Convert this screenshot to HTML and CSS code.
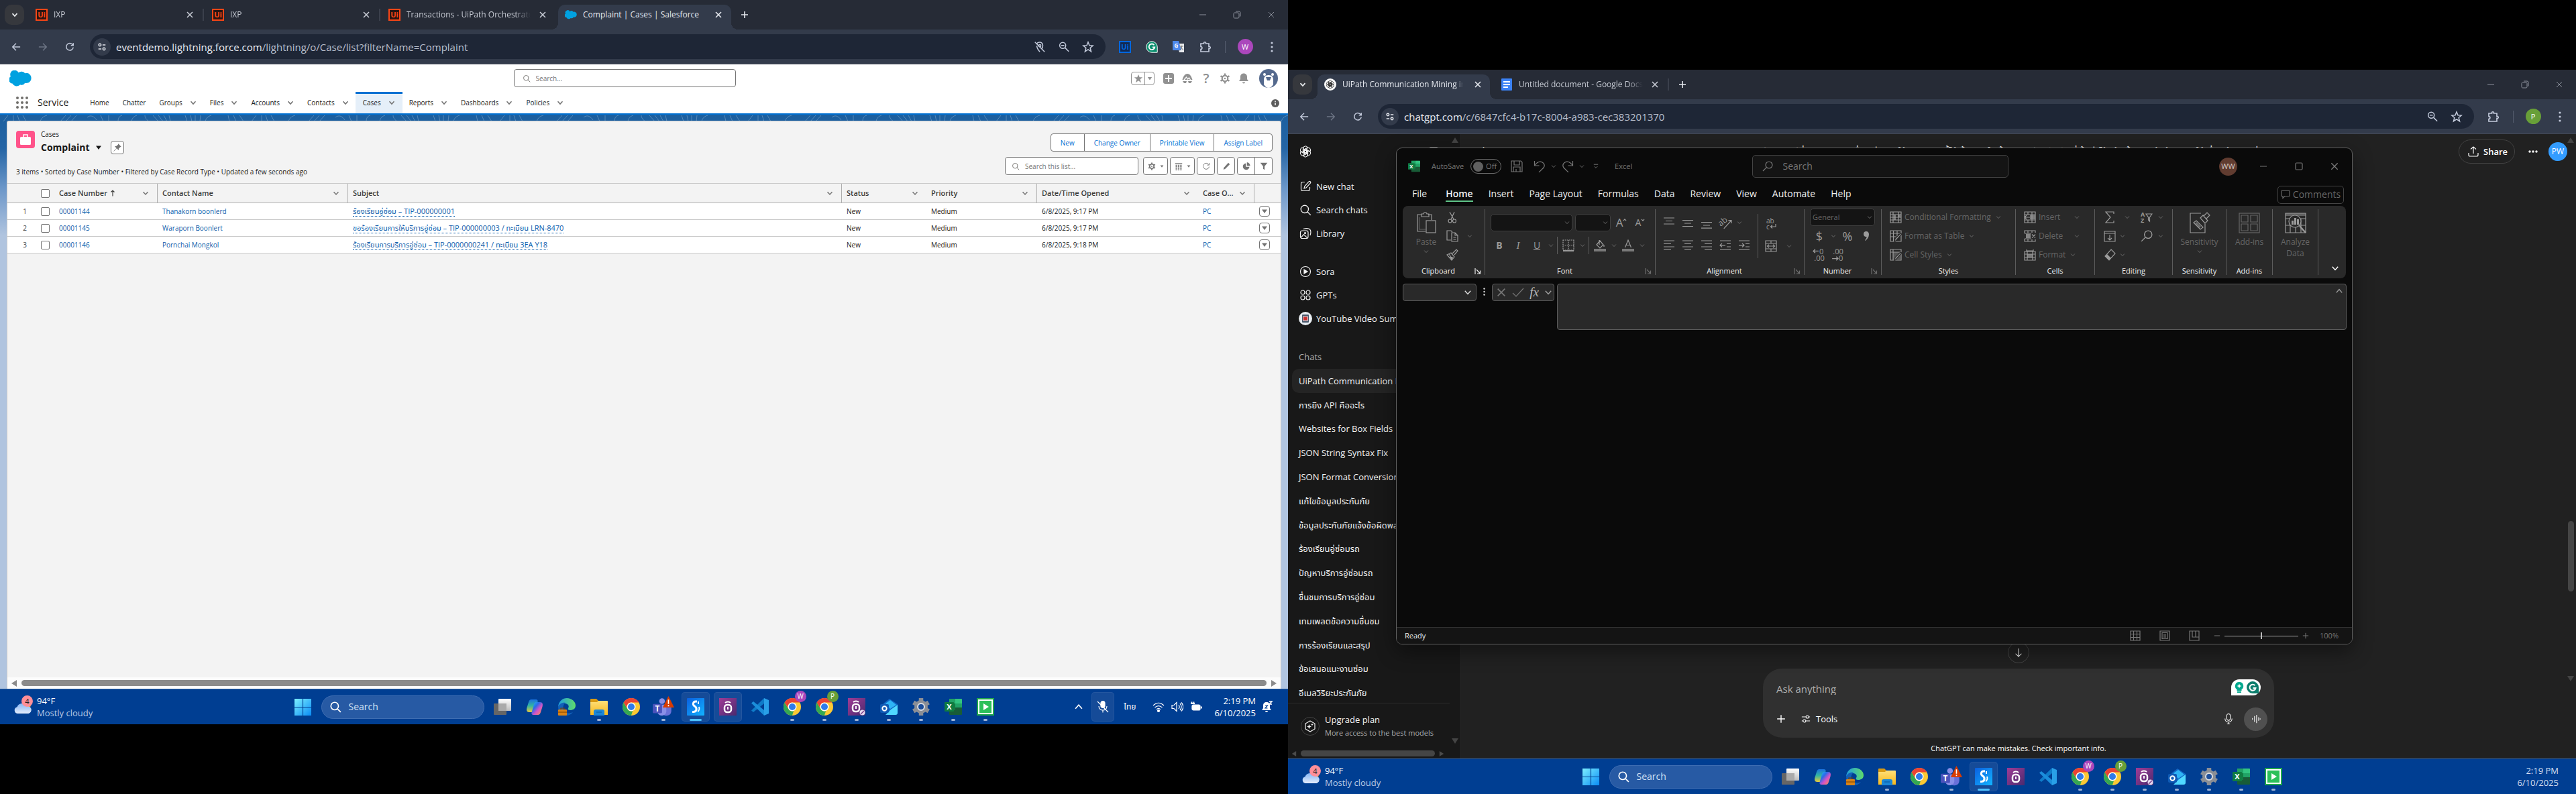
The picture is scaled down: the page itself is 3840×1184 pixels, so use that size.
FILE: index.html
```html
<!DOCTYPE html>
<html lang="en">
<head>
<meta charset="utf-8">
<title>Desktop</title>
<link rel="stylesheet" href="styles.css">
</head>
<body>
<svg class="defs" aria-hidden="true">
  <defs>
    <linearGradient id="g-win" x1="0" y1="0" x2="1" y2="1"><stop offset="0" stop-color="#7df0ff"/><stop offset="1" stop-color="#0a8cf5"/></linearGradient>
    <linearGradient id="g-cop" x1="0" y1="0" x2="1" y2="1"><stop offset="0" stop-color="#1fc8f0"/><stop offset=".35" stop-color="#2a6be8"/><stop offset=".6" stop-color="#d553c8"/><stop offset="1" stop-color="#ff9a3c"/></linearGradient>
    <linearGradient id="g-cop2" x1="0" y1="0" x2="0" y2="1"><stop offset="0" stop-color="#1a6fe0"/><stop offset=".5" stop-color="#33b5a0"/><stop offset="1" stop-color="#e8c93c"/></linearGradient>
    <linearGradient id="g-edge" x1="0" y1="0" x2="1" y2="0"><stop offset="0" stop-color="#1f9de0"/><stop offset="1" stop-color="#5fdc6a"/></linearGradient>
    <linearGradient id="g-fold" x1="0" y1="0" x2="0" y2="1"><stop offset="0" stop-color="#ffe07a"/><stop offset="1" stop-color="#f7b81c"/></linearGradient>
    <linearGradient id="g-s" x1="0" y1="0" x2="1" y2="1"><stop offset="0" stop-color="#0a5fe0"/><stop offset="1" stop-color="#12b4ff"/></linearGradient>
    <linearGradient id="g-p" x1="0" y1="0" x2="1" y2="1"><stop offset="0" stop-color="#a03c96"/><stop offset="1" stop-color="#4a2a6e"/></linearGradient>
    <linearGradient id="g-cloud" x1="0" y1="0" x2="0" y2="1"><stop offset="0" stop-color="#86b6f5"/><stop offset="1" stop-color="#e4ecfb"/></linearGradient>
    <linearGradient id="g-tv" x1="0" y1="0" x2="0" y2="1"><stop offset="0" stop-color="#fff"/><stop offset="1" stop-color="#bdbdbd"/></linearGradient>
  </defs>
  <symbol id="chev" viewBox="0 0 10 10"><path d="M1.5 3.2 5 7l3.5-3.8"/></symbol>
  <symbol id="chev-up" viewBox="0 0 10 10"><path d="M1.5 7 5 3l3.5 4"/></symbol>
  <symbol id="x" viewBox="0 0 12 12"><path d="m2 2 8 8M10 2l-8 8"/></symbol>
  <symbol id="plus" viewBox="0 0 12 12"><path d="M6 1v10M1 6h10"/></symbol>
  <symbol id="minus" viewBox="0 0 12 12"><path d="M1 6h10"/></symbol>
  <symbol id="restore" viewBox="0 0 12 12"><rect x="1" y="3" width="8" height="8" rx="1.5"/><path d="M4 1h5a2 2 0 0 1 2 2v5.5"/></symbol>
  <symbol id="max" viewBox="0 0 12 12"><rect x="1" y="1" width="10" height="10" rx="1.5"/></symbol>
  <symbol id="back" viewBox="0 0 16 16"><path d="M15 8H2M8 2 2 8l6 6"/></symbol>
  <symbol id="fwd" viewBox="0 0 16 16"><path d="M1 8h13M8 2l6 6-6 6"/></symbol>
  <symbol id="reload" viewBox="0 0 16 16"><path d="M13.5 5.2A6 6 0 1 0 14 8.8M14 1.5v4h-4"/></symbol>
  <symbol id="tune" viewBox="0 0 16 16"><circle cx="4.5" cy="4.5" r="2"/><path d="M9 4.500h5M2 11.500h5"/><circle cx="11.5" cy="11.5" r="2"/></symbol>
  <symbol id="locoff" viewBox="0 0 20 20"><path d="M5 4.500C7 1 15 1 15 8c0 2-.8 3.800-2 5.500M10 18c-3-3.500-5-7-5-10M2 2l16 16"/><circle cx="10" cy="8" r="1.8"/></symbol>
  <symbol id="zoomout" viewBox="0 0 20 20"><circle cx="8" cy="7.5" r="5"/><path d="m12 11.500 6 6M5.500 7.500h5"/></symbol>
  <symbol id="star" viewBox="0 0 20 20"><path d="m10 2 2.200 5.500 5.800.4-4.500 3.800 1.500 5.800-5-3.200-5 3.200 1.500-5.800L2 7.900l5.800-.4z"/></symbol>
  <symbol id="puzzle" viewBox="0 0 20 20"><path d="M3 5h4.500c-.6-3 3.600-3 3 0H15v4.500c3-.6 3 3.600 0 3V17H3v-3.500c2.500 0 2.500-4 0-4z"/></symbol>
  <symbol id="kebab" viewBox="0 0 4 18"><g fill="currentColor" stroke="none"><circle cx="2" cy="3" r="1.6"/><circle cx="2" cy="9" r="1.6"/><circle cx="2" cy="15" r="1.6"/></g></symbol>
  <symbol id="ui" viewBox="0 0 18 18"><rect x="1" y="1" width="16" height="16" fill="#2b1512" stroke="#fa4616" stroke-width="2"/><text x="9" y="13" font-size="11" font-weight="700" text-anchor="middle" fill="#fa4616" stroke="none">Ui</text></symbol>
  <symbol id="ui-b" viewBox="0 0 18 18"><rect x="1" y="1" width="16" height="16" fill="#122a52" stroke="#0067df" stroke-width="2"/><text x="9" y="13" font-size="11" font-weight="700" text-anchor="middle" fill="#0067df" stroke="none">Ui</text></symbol>
  <symbol id="cloud" viewBox="0 0 34 24"><path fill="#00a1e0" stroke="none" d="M14 3a7 7 0 0 1 10 1 7.500 7.500 0 0 1 9.500 8c0 5-5 8-9.500 7a6 6 0 0 1-7.500 2.500A7 7 0 0 1 5 20 6 6 0 0 1 2 9a6.500 6.500 0 0 1 12-6z"/></symbol>
  <symbol id="gram" viewBox="0 0 18 18"><path fill="#0b8f6f" stroke="#fff" stroke-width="1" d="M9 .8a8.200 8.200 0 0 1 8.200 8.200v8.200H9A8.200 8.200 0 0 1 9 .8z"/><path d="M12.500 6.200A4.300 4.300 0 1 0 13.300 9.500H10" fill="none" stroke="#fff" stroke-width="1.8"/></symbol>
  <symbol id="trans" viewBox="0 0 18 18"><path fill="#e8eaed" stroke="none" d="M7 4h10v13H10z"/><path fill="#4d88ec" stroke="none" d="M0 0h9l4 14H1a1 1 0 0 1-1-1z"/><text x="5.5" y="10" font-size="8" font-weight="700" text-anchor="middle" fill="#fff" stroke="none">G</text><path d="M11 8h5M13.500 7c0 4-1 6-3 7M12 9l4 5" stroke="#777" stroke-width="1"/></symbol>
  <symbol id="mag" viewBox="0 0 16 16"><circle cx="7" cy="7" r="5"/><path d="m10.500 10.500 4.500 4.500"/></symbol>
  <symbol id="mag-l" viewBox="0 0 16 16"><circle cx="10" cy="6" r="5"/><path d="M6.300 9.700 1 15"/></symbol>
  <symbol id="caret" viewBox="0 0 10 10"><path fill="currentColor" stroke="none" d="M1 2.500h8L5 8z"/></symbol>
  <symbol id="starf" viewBox="0 0 16 16"><path fill="currentColor" stroke="none" d="m8 1 2 5h5l-4 3.500L12.500 15 8 11.800 3.500 15 5 9.500 1 6h5z"/></symbol>
  <symbol id="plusbox" viewBox="0 0 16 16"><rect width="16" height="16" rx="3" fill="currentColor" stroke="none"/><path d="M8 3v10M3 8h10" stroke="#fff" stroke-width="2"/></symbol>
  <symbol id="trail" viewBox="0 0 16 16"><path fill="currentColor" stroke="none" d="M8 1c4 0 6 4 7.500 9H.5C2 5 4 1 8 1zM1 12h6l-1 3H3zM9 12h6l-2 3h-3z"/><path d="m3 10 3.500-4 2 3 2-2 2 3" stroke="#fff" stroke-width="1.2"/></symbol>
  <symbol id="gear" viewBox="0 0 16 16"><circle cx="8" cy="8" r="4.3" stroke-width="2.2"/><path d="M8 .5v2.500M8 13v2.500M1.500 4.200l2.200 1.300M12.300 10.500l2.200 1.300M1.500 11.800l2.200-1.300M12.300 5.500l2.200-1.300" stroke-width="2.4"/><circle cx="8" cy="8" r="1.2" fill="currentColor" stroke="none"/></symbol>
  <symbol id="bell" viewBox="0 0 16 16"><path fill="currentColor" stroke="none" d="M8 .5c3.200 0 5 2.300 5 5V9l2 3H1l2-3V5.500c0-2.700 1.800-5 5-5zM6 13.500h4a2 2 0 0 1-4 0z"/></symbol>
  <symbol id="bear" viewBox="0 0 28 28"><circle cx="14" cy="14" r="14" fill="#54698d" stroke="none"/><path fill="#fff" stroke="none" d="M14 9c5 0 7 3 7 7v7c-2 3-4 5-7 5s-5-2-7-5v-7c0-4 2-7 7-7z"/><circle cx="8" cy="8" r="2" fill="#fff" stroke="none"/><circle cx="20" cy="8" r="2" fill="#fff" stroke="none"/><path fill="#54698d" stroke="none" d="M10 12h8l-2 5h-4z"/></symbol>
  <symbol id="info" viewBox="0 0 12 12"><circle cx="6" cy="6" r="6" fill="currentColor" stroke="none"/><path d="M6 5v4M6 2.500v1.500" stroke="#fff" stroke-width="1.5"/></symbol>
  <symbol id="waffle" viewBox="0 0 18 18"><g fill="#706e6b" stroke="none"><circle cx="2" cy="2" r="2"/><circle cx="9" cy="2" r="2"/><circle cx="16" cy="2" r="2"/><circle cx="2" cy="9" r="2"/><circle cx="9" cy="9" r="2"/><circle cx="16" cy="9" r="2"/><circle cx="2" cy="16" r="2"/><circle cx="9" cy="16" r="2"/><circle cx="16" cy="16" r="2"/></g></symbol>
  <symbol id="case" viewBox="0 0 28 26"><rect width="28" height="26" rx="4" fill="#ff538a"/><rect x="6" y="9" width="16" height="12" rx="1.5" fill="#fff"/><path d="M11 9V6h6v3" fill="none" stroke="#fff" stroke-width="1.5"/></symbol>
  <symbol id="pin" viewBox="0 0 16 16"><path fill="currentColor" stroke="none" d="m9.500 1.500 5 5-1.500.5-2.500 2.500-.5 3-3-3L2 14.500 1.500 14l5-5-3-3 3-.5L9 3z"/></symbol>
  <symbol id="cols" viewBox="0 0 16 16"><path d="M1 2.500h14M2 6h3M6.500 6h3M11 6h3M2 9h3M6.500 9h3M11 9h3M2 12h3M6.500 12h3M11 12h3M2 15h3M6.500 15h3M11 15h3" stroke-width="1.8"/></symbol>
  <symbol id="pencil" viewBox="0 0 16 16"><path fill="currentColor" stroke="none" d="m12 1 3 3-9 9-3.500 1.500L3 11z"/></symbol>
  <symbol id="pie" viewBox="0 0 16 16"><path fill="currentColor" stroke="none" d="M7 2v7h7a6.500 6.500 0 1 1-7-7zM9 0a7 7 0 0 1 6.500 7H9z"/></symbol>
  <symbol id="funnel" viewBox="0 0 16 16"><path fill="currentColor" stroke="none" d="M1 1h14l-5.500 7v7l-3-2V8z"/></symbol>
  <symbol id="sort" viewBox="0 0 8 10"><path d="M4 9.500V1M1.500 3.500 4 1l2.500 2.500"/></symbol>
  <symbol id="weather" viewBox="0 0 28 28"><circle cx="19" cy="14" r="6" fill="#f59a23"/><path fill="url(#g-cloud)" d="M5 27a5 5 0 0 1-.5-9.800 8 8 0 0 1 14.500-1A5.500 5.500 0 1 1 21.500 27z"/><circle cx="19.5" cy="8.500" r="8.500" fill="#ff8f99"/><text x="19.5" y="12.500" font-size="11" text-anchor="middle" fill="#222">4</text></symbol>
  <symbol id="win" viewBox="0 0 26 26"><path fill="url(#g-win)" d="M0 0h12.400v12.400H0zM13.600 0H26v12.400H13.600zM0 13.600h12.400V26H0zM13.600 13.600H26V26H13.600z"/></symbol>
  <symbol id="tview" viewBox="0 0 26 26"><rect x="7" y="1" width="19" height="18" rx="1" fill="url(#g-tv)"/><rect x="0" y="8" width="19" height="17" rx="1" fill="#666"/><path d="M7 8h12v11H7z" fill="#aaa"/></symbol>
  <symbol id="copilot" viewBox="0 0 26 26"><path fill="url(#g-cop2)" d="M8 2h7c2 0 3 1.500 2.500 3.500L14 18c-.8 2.500-2 3-4 3H5c-4 0-4.500-3-3.500-7L4 6c.8-2.800 2-4 4-4z"/><path fill="url(#g-cop)" d="M18 25h-7c-2 0-3-1.500-2.500-3.500L12 9c.8-2.500 2-3 4-3h5c4 0 4.500 3 3.500 7L22 21c-.8 2.800-2 4-4 4z"/></symbol>
  <symbol id="edge" viewBox="0 0 26 26"><path fill="url(#g-edge)" d="M0 13C1 4 7 0 13 0c7 0 13 5 13 11 0 5-4 7-8 7-3 0-4-1-3-3 2-3 0-7-5-7-5 0-8 3-10 5z"/><path fill="#1360b8" d="M0 13c2-5 7-7 11-6-4 3-5 9-1 13 3 3 8 3 12 1-3 4-7 5-10 5C5 26 0 20 0 13z"/><rect x="0" y="17" width="13" height="9" rx="1" fill="#d98316"/><path d="M4 17v-2h5v2M0 21h13" fill="none" stroke="#7a4300"/></symbol>
  <symbol id="folder" viewBox="0 0 26 26"><path fill="#d99a12" d="M0 2a1 1 0 0 1 1-1h8l3 3v4H0z"/><path fill="url(#g-fold)" d="M0 6h10l2-2h13a1 1 0 0 1 1 1v20H0z"/><path fill="#1a86d8" d="M5 26v-6a3 3 0 0 1 3-3h10a3 3 0 0 1 3 3v6z"/><path d="M9 21h8" stroke="#0b5ba6"/></symbol>
  <symbol id="chrome" viewBox="0 0 24 24"><circle cx="12" cy="12" r="12" fill="#fcc934"/><path fill="#34a853" d="M1.600 6 6.800 15A6 6 0 0 0 14 17.600L11.900 24A12 12 0 0 1 1.600 6z"/><path fill="#ea4335" d="M1.600 6A12 12 0 0 1 22.400 6H12a6 6 0 0 0-5.200 9z"/><circle cx="12" cy="12" r="6" fill="#fff"/><circle cx="12" cy="12" r="4.6" fill="#2f7bea"/></symbol>
  <symbol id="teams" viewBox="0 0 30 30"><circle cx="13" cy="7" r="4" fill="#8a8fe8"/><path fill="#6a70d8" d="M13 12h13v9a7 7 0 0 1-13 3z"/><path fill="#8a8fe8" d="M7 12h12v10a6.500 6.500 0 0 1-12 2z"/><rect x="0" y="11" width="13" height="13" rx="1.5" fill="#4b53bc"/><text x="6.5" y="21.5" font-size="11" font-weight="700" text-anchor="middle" fill="#fff">T</text><path fill="#d83b01" d="M22 0 30 16H14z"/><path d="M22 5v6M22 12.500v1.800" stroke="#fff" stroke-width="1.6"/></symbol>
  <symbol id="s-app" viewBox="0 0 26 26"><rect width="26" height="26" rx="1" fill="url(#g-s)"/><path d="M15 5h-2c-4 0-5 5-1.500 7s4 8-1.500 8.500H8" fill="none" stroke="#fff" stroke-width="3"/><path d="M17 5v4M18 13c1 3 0 6-2 7" fill="none" stroke="#fff" stroke-width="2"/></symbol>
  <symbol id="p-app" viewBox="0 0 26 26"><rect width="26" height="26" fill="url(#g-p)"/><rect x="8" y="10" width="10" height="11" rx="4" fill="none" stroke="#fff" stroke-width="2.5"/><path d="M9 7c2-2 6-2 8 0M13 13v4" fill="none" stroke="#fff" stroke-width="2"/></symbol>
  <symbol id="p-app2" viewBox="0 0 26 26"><rect width="26" height="26" fill="url(#g-p)"/><rect x="7" y="9" width="10" height="11" rx="4" fill="none" stroke="#fff" stroke-width="2.5"/><path d="M8 6c2-2 6-2 8 0M12 12v4" fill="none" stroke="#fff" stroke-width="2"/><circle cx="21.5" cy="21.5" r="4" fill="#e6d9ee"/><path d="m19 24 5-5" stroke="#7a3b8a" stroke-width="1.5"/></symbol>
  <symbol id="vscode" viewBox="0 0 26 26"><path fill="#29a0e8" d="m19 0 7 3v20l-7 3z"/><path fill="#0f7cc9" d="M19 0v8L3 21 0 18.500z"/><path fill="#1b8edb" d="M19 26v-8L3 5 0 7.500z"/></symbol>
  <symbol id="outlook" viewBox="0 0 26 26"><path fill="#1266c4" d="m5 8 9-7 12 8v10H5z"/><path fill="#2fb4f5" d="m8 8 7-5 9 7-9 6z"/><path fill="#50d8ff" d="M26 10v12a3 3 0 0 1-3 3H8l8-8z"/><rect x="0" y="9" width="13" height="13" rx="2" fill="#0f5bb5"/><circle cx="6.5" cy="15.5" r="3.2" fill="none" stroke="#fff" stroke-width="2"/></symbol>
  <symbol id="settings" viewBox="0 0 26 26"><path d="M13 0v26M1.700 6.500l22.600 13M1.700 19.500l22.600-13" stroke="#8b8f96" stroke-width="6.5"/><circle cx="13" cy="13" r="10" fill="#8b8f96"/><circle cx="13" cy="13" r="5" fill="#1c4f9c" stroke="#d8dce2" stroke-width="2"/></symbol>
  <symbol id="xl" viewBox="0 0 26 26"><rect x="7" y="1" width="19" height="24" rx="1" fill="#185c37" stroke="none"/><path fill="#33c481" stroke="none" d="M16 1h9a1 1 0 0 1 1 1v6H16z"/><path fill="#21a366" stroke="none" d="M7 1h9v7H7zM16 8h10v6H16z"/><path fill="#107c41" stroke="none" d="M7 8h9v10H7z"/><rect x="0" y="6" width="14" height="14" rx="1" fill="#107c41" stroke="none"/><text x="7" y="17" font-size="11" font-weight="700" text-anchor="middle" fill="#fff" stroke="none">X</text></symbol>
  <symbol id="play" viewBox="0 0 26 26"><rect width="26" height="26" fill="#1fa64a"/><rect x="3" y="3" width="20" height="20" fill="#2cc05a" stroke="#fff" stroke-width="2"/><path fill="#fff" d="m10 8 8 5-8 5z"/></symbol>
  <symbol id="micoff" viewBox="0 0 20 20"><rect x="7" y="1.5" width="6" height="10" rx="3" fill="currentColor"/><path d="M4 9c0 8 12 8 12 0M10 15v3.500M2 2l16 16"/></symbol>
  <symbol id="mic" viewBox="0 0 16 20"><rect x="5" y="1.5" width="6" height="11" rx="3"/><path d="M2 9.500c0 8 12 8 12 0M8 15.500v3M5.500 18.500h5"/></symbol>
  <symbol id="wifi" viewBox="0 0 18 18"><path d="M1 7c5-5 11-5 16 0M3.500 10c4-3.500 7-3.500 11 0M6 12.800c2-2 4-2 6 0"/><circle cx="9" cy="15" r="1.5" fill="currentColor"/></symbol>
  <symbol id="vol" viewBox="0 0 18 18"><path d="M1 6.500h3l4-4v13l-4-4H1zM11 6c1.500 2 1.500 4 0 6M13 4c2.500 3 2.500 7 0 10M15 2.500c3.500 4 3.500 9 0 13"/></symbol>
  <symbol id="batt" viewBox="0 0 18 18"><rect x="3" y="6" width="12" height="8" rx="2" fill="currentColor"/><path d="M17 8.500v3M1 4h6M2.500 1.500V4M5.500 1.500V4M4 6v4" stroke-width="1.8"/></symbol>
  <symbol id="bellz" viewBox="0 0 18 18"><path fill="currentColor" stroke="none" d="M8 2c3 0 5 2 5 5v4l2 3H1l2-3V7c0-3 2-5 5-5zM6 15h4a2 2 0 0 1-4 0z"/><path d="M6 7h3.500L6 11h3.500" stroke="#003e92"/><path d="M12 1h4l-4 4h4" stroke-width="1.5"/></symbol>
  <symbol id="gpt" viewBox="0 0 24 24"><g id="knot"><path id="petal" d="M12 2.200a4.300 4.300 0 0 1 4.200 3.400l-6 3.500v6.300L7.600 13.900V7A4.700 4.700 0 0 1 12 2.200z"/><use href="#petal" transform="rotate(60 12 12)"/><use href="#petal" transform="rotate(120 12 12)"/><use href="#petal" transform="rotate(180 12 12)"/><use href="#petal" transform="rotate(240 12 12)"/><use href="#petal" transform="rotate(300 12 12)"/></g></symbol>
  <symbol id="gpt-fav" viewBox="0 0 24 24"><circle cx="12" cy="12" r="12" fill="#fff" stroke="none"/><g transform="translate(2.400 2.400) scale(.8)" stroke="#222"><use href="#knot"/></g></symbol>
  <symbol id="gdoc" viewBox="0 0 18 18"><rect x="1" width="16" height="18" rx="1" fill="#3b82f6" stroke="none"/><path d="M4 5h10M4 9h10M4 13h7" stroke="#fff" stroke-width="1.8"/></symbol>
  <symbol id="compose" viewBox="0 0 18 18"><path d="M8 2.500H5A2.500 2.500 0 0 0 2.500 5v8A2.500 2.500 0 0 0 5 15.500h8a2.500 2.500 0 0 0 2.500-2.500v-3M14 1.800a1.600 1.600 0 0 1 2.300 2.300L10 11l-3 .8.8-3z"/></symbol>
  <symbol id="library" viewBox="0 0 18 18"><rect x="1.500" y="5" width="11.5" height="11.5" rx="2.5"/><path d="M5.500 2.500c4-1 8-1.500 10 .5s1.500 6 .5 9M2.500 15l4-4.500 5 5"/><circle cx="8.5" cy="8.5" r="1"/></symbol>
  <symbol id="sora" viewBox="0 0 18 18"><circle cx="9" cy="9" r="7.5"/><path fill="currentColor" d="m7 6 5 3-5 3z"/></symbol>
  <symbol id="gpts" viewBox="0 0 18 18"><circle cx="5" cy="5" r="3"/><circle cx="13" cy="5" r="3"/><circle cx="5" cy="13" r="3"/><circle cx="13" cy="13" r="3"/></symbol>
  <symbol id="ytgpt" viewBox="0 0 20 20"><circle cx="10" cy="10" r="10" fill="#e9eef2" stroke="none"/><rect x="5" y="4" width="10" height="12" rx="1" fill="#49586b" stroke="none"/><rect x="6.5" y="7" width="7" height="6" fill="#c92f2f" stroke="#fff" stroke-width=".8"/></symbol>
  <symbol id="panel" viewBox="0 0 18 18"><rect x="1.5" y="3" width="15" height="12" rx="3"/><path d="M7 3v12"/></symbol>
  <symbol id="spark" viewBox="0 0 28 28"><circle cx="14" cy="14" r="13.5" stroke="#444" stroke-width="1"/><path d="m14 6 7 4v8l-7 4-7-4v-8z"/><path fill="currentColor" stroke="none" d="m12.500 11 1 2.500 2.500 1-2.500 1-1 2.500-1-2.500-2.500-1 2.500-1zM17 9.500l.6 1.400 1.400.6-1.400.6-.6 1.400-.6-1.400-1.400-.6 1.400-.6z"/></symbol>
  <symbol id="share" viewBox="0 0 18 18"><path d="M9 12V2M5 5.500 9 2l4 3.500M2 11v3a2 2 0 0 0 2 2h10a2 2 0 0 0 2-2v-3"/></symbol>
  <symbol id="dots" viewBox="0 0 18 18"><g fill="currentColor" stroke="none"><circle cx="4" cy="9" r="1.7"/><circle cx="9" cy="9" r="1.7"/><circle cx="14" cy="9" r="1.7"/></g></symbol>
  <symbol id="down" viewBox="0 0 16 16"><path d="M8 1v14M3 10l5 5 5-5"/></symbol>
  <symbol id="sliders" viewBox="0 0 16 16"><path d="M1 4.500h7M13 4.500h2M1 11.500h2M8 11.500h7"/><circle cx="10.5" cy="4.5" r="2.3"/><circle cx="5.5" cy="11.5" r="2.3"/></symbol>
  <symbol id="wave" viewBox="0 0 16 16"><path d="M2 6.500v3M5.500 3v10M9 1v14M12.500 5v6M15 7v2"/></symbol>
  <symbol id="gbadge" viewBox="0 0 44 24"><path fill="#fff" stroke="none" d="M12 0h20a12 12 0 0 1 0 24H0V12A12 12 0 0 1 12 0z"/><path fill="#00a88e" stroke="none" d="M12 4a6 6 0 0 1 3.500 11v2h-7v-2A6 6 0 0 1 12 4zM9 18h6v2H9z"/><path fill="#fff" stroke="none" d="m12 6.500 1 2.500 2.500 1-2.500 1-1 2.500-1-2.500L8.500 10l2.500-1z"/><path fill="#0b7d6c" stroke="none" d="M32 3a9 9 0 0 1 9 9v9h-9a9 9 0 0 1 0-18z"/><path d="M35.500 9.200A4.500 4.500 0 1 0 36.500 13H32.500" stroke="#fff" stroke-width="2"/></symbol>
  <symbol id="save" viewBox="0 0 18 18"><path d="M1 1h14l2 2v14H1zM5 1v6h8V1M4 17v-7h10v7M8 17v-4"/></symbol>
  <symbol id="undo" viewBox="0 0 18 18"><path d="M1.500 1v7h7M1.500 8C5 3 9 1 13 3s4.500 7 0 10l-5 5"/></symbol>
  <symbol id="redo" viewBox="0 0 18 18"><path d="M16.500 1v7h-7M16.500 8C13 3 9 1 5 3S.5 10 5 13l5 5"/></symbol>
  <symbol id="qat" viewBox="0 0 10 10"><path d="M1 1.500h8M2 5l3 3 3-3"/></symbol>
  <symbol id="paste" viewBox="0 0 30 32"><path d="M8 4H2v25h12M18 4h5v8M8 7V3h3c0-3 5-3 5 0h3v4z"/><rect x="15" y="13" width="14" height="18"/><path d="M4.500 8v18H14" opacity=".5"/></symbol>
  <symbol id="cut" viewBox="0 0 18 18"><path d="m5 1 6 11M12 1 7 12"/><circle cx="5.5" cy="14.5" r="2.5"/><circle cx="12" cy="14.5" r="2.5"/></symbol>
  <symbol id="copy" viewBox="0 0 18 18"><path d="M7 15H1V1h6l2 2M8 4h5l4 4v9H8zM13 4v4h4M10.500 11h4M10.500 14h4"/></symbol>
  <symbol id="brush" viewBox="0 0 18 18"><path d="m1 9 6-3 5 6-4 5zM9 7l6-6 2 2-5 6M4 8l5 7"/><path fill="currentColor" stroke="none" d="M5 12h5l-2 5z"/></symbol>
  <symbol id="bord" viewBox="0 0 18 18"><path d="M1 1h16v15H1zM9 1v15M1 8.500h16" stroke-dasharray="2 1"/><path d="M1 17h16" stroke-width="2"/></symbol>
  <symbol id="fill" viewBox="0 0 18 18"><path d="m4 8 5-6 5 6-5 5zM8 1v7M15 8v3"/><path fill="currentColor" stroke="none" opacity=".7" d="M0 14h18v4H0z"/></symbol>
  <symbol id="fcol" viewBox="0 0 18 18"><path d="m4.500 12 4.500-11 4.500 11M6 8.500h6"/><path fill="currentColor" stroke="none" opacity=".7" d="M0 14h18v4H0z"/></symbol>
  <symbol id="a-top" viewBox="0 0 18 18"><path d="M1 2h16M4 6.500h10M1 11h16"/></symbol>
  <symbol id="a-mid" viewBox="0 0 18 18"><path d="M1 5.500h16M4 10h10M1 14.500h16"/></symbol>
  <symbol id="a-bot" viewBox="0 0 18 18"><path d="M1 8.500h16M4 13h10M1 17.200h16"/></symbol>
  <symbol id="a-l" viewBox="0 0 18 18"><path d="M1 2h16M1 6.500h11M1 11h16M1 15.500h11"/></symbol>
  <symbol id="a-c" viewBox="0 0 18 18"><path d="M1 2h16M4 6.500h10M1 11h16M4 15.500h10"/></symbol>
  <symbol id="a-r" viewBox="0 0 18 18"><path d="M1 2h16M6 6.500h11M1 11h16M6 15.500h11"/></symbol>
  <symbol id="ind-l" viewBox="0 0 18 18"><path d="M1 2h16M11 6.500h6M11 11h6M1 15.500h16M9 8.800H1M4 6l-3 2.800L4 11.500"/></symbol>
  <symbol id="ind-r" viewBox="0 0 18 18"><path d="M1 2h16M11 6.500h6M11 11h6M1 15.500h16M1 8.800h8M6 6l3 2.800L6 11.500"/></symbol>
  <symbol id="orient" viewBox="0 0 18 18"><text x="0" y="11" font-size="11" transform="rotate(-40 6 9)" fill="currentColor" stroke="none">ab</text><path d="m7 17 10-11M17 10V6h-4"/></symbol>
  <symbol id="wrap" viewBox="0 0 18 18"><text x="2" y="8" font-size="10" fill="currentColor" stroke="none">ab</text><text x="2" y="17" font-size="10" fill="currentColor" stroke="none">c</text><path d="M16 9v4H9M11 10.500 8.500 13l2.500 2.500"/></symbol>
  <symbol id="merge" viewBox="0 0 18 18"><path d="M1 1h16v16H1zM1 5h16M1 13h16M9 1v4M9 13v4M3.500 9h11M6 6.800 3.500 9 6 11.200M12 6.800 14.500 9 12 11.200"/></symbol>
  <symbol id="dec-i" viewBox="0 0 18 18"><text x="9" y="8" font-size="10" fill="currentColor" stroke="none">0</text><text x="2" y="17" font-size="10" fill="currentColor" stroke="none">.00</text><path d="M8 4H1M3.500 1.500 1 4l2.500 2.500"/></symbol>
  <symbol id="dec-d" viewBox="0 0 18 18"><text x="2" y="8" font-size="10" fill="currentColor" stroke="none">.00</text><text x="10" y="17" font-size="10" fill="currentColor" stroke="none">0</text><path d="M1 14h8M6.500 11.500 9 14l-2.500 2.500"/></symbol>
  <symbol id="cf" viewBox="0 0 18 18"><path d="M1 1h16v16H1zM5 1v16M13 1v16M1 5h16M1 9h16M1 13h16"/><path fill="currentColor" stroke="none" opacity=".7" d="M6 5h3v8H6zM12 5h4v4h-4z"/></symbol>
  <symbol id="ft" viewBox="0 0 18 18"><path d="M1 1h16v16H1zM5.500 1v16M11 1v8M1 5h16M1 10h9"/><path fill="currentColor" stroke="#292929" d="m18 6-8 9-3 3 1-5 8-8z"/></symbol>
  <symbol id="cs" viewBox="0 0 18 18"><path d="M1 1h16v16H1zM5 1v16M1 5h16"/><path fill="currentColor" stroke="none" opacity=".4" d="M5 5h11v11H5z"/><path fill="currentColor" stroke="#292929" d="m18 6-8 9-3 3 1-5 8-8z"/></symbol>
  <symbol id="ins" viewBox="0 0 18 18"><path d="M1 1h16v16H1zM6 1v4M12 1v16M1 5h16M1 13h16M6 13v4M9 9H1M4 6 1 9l3 3"/><path fill="currentColor" stroke="none" opacity=".7" d="M9 6h8v6H9z"/></symbol>
  <symbol id="del" viewBox="0 0 18 18"><path d="M1 5V1h16v3M1 13v4h16v-3M6 1v4M12 1v3M6 13v4M12 14v3M1 5h10M1 13h10M12 6.500l5 5M17 6.500l-5 5"/><path fill="currentColor" stroke="none" opacity=".8" d="M3 6h7v6H3z"/></symbol>
  <symbol id="fmt" viewBox="0 0 18 18"><path d="M1 4h16v13H1zM5 4v13M13 4v13M1 8h16M1 13h16M4 1v2h10V1"/><path fill="currentColor" stroke="none" opacity=".7" d="M5 8h8v5H5z"/></symbol>
  <symbol id="sigma" viewBox="0 0 18 18"><path d="M15 4V1H3l7 8-7 8h12v-3"/></symbol>
  <symbol id="filld" viewBox="0 0 18 18"><path d="M1 2h16v15H1zM1 5h16M9 7v8M6 12l3 3 3-3"/></symbol>
  <symbol id="erase" viewBox="0 0 18 18"><path d="m11 1 6 6-9 10-6-6z"/><path fill="currentColor" stroke="none" d="m5 8 6 6-3 3-6-6z"/></symbol>
  <symbol id="az" viewBox="0 0 18 18"><text x="0" y="8" font-size="9" font-weight="700" fill="currentColor" stroke="none">A</text><text x="0" y="17" font-size="9" font-weight="700" fill="currentColor" stroke="none">Z</text><path d="M8 4h9l-3.500 5v6l-2-2V9z"/></symbol>
  <symbol id="sens" viewBox="0 0 32 32"><path d="M18 2H2v29h22V18M7 16l4-3 10 10-4 3zM17 9l4-4 7 8-4 4zM22 6l5-5 4 4-5 5"/><path d="m10 16 7 7" stroke-width="3" opacity=".6"/></symbol>
  <symbol id="addin" viewBox="0 0 32 32"><rect x="1" y="2" width="30" height="29"/><path d="M4 5h10v10H4zM18 5h10v10H18zM4 18h10v10H4zM18 18h10v10H18z"/></symbol>
  <symbol id="analyze" viewBox="0 0 32 32"><path d="M1 2h30v29H1zM1 10h30M1 20h30M8 10v21M16 10v21M24 10v21"/><path fill="currentColor" stroke="none" opacity=".5" d="M1 2h30v4H1z"/><circle cx="15" cy="14" r="9" fill="#292929"/><path d="m22 21 9 10" stroke-width="2.5"/><path fill="currentColor" stroke="none" d="M10 13h3v6h-3zM14 9h3v10h-3zM18 11h3v8h-3z"/></symbol>
  <symbol id="launch" viewBox="0 0 10 10"><path d="M1 0v9M3 2l5 5.500M8.500 3.500V8H4"/></symbol>
  <symbol id="comment" viewBox="0 0 14 14"><path d="M1 1.500h12v8H6l-3 3v-3H1z"/></symbol>
  <symbol id="check" viewBox="0 0 18 14"><path d="m1 8 5 5L17 1"/></symbol>
  <symbol id="comma" viewBox="0 0 10 18"><path fill="currentColor" stroke="none" d="M5 2c2.500 0 4 1.500 4 4.500 0 4-2 7-5.500 9.500l-.5-.8c1.500-1.500 2.500-3.200 2.600-5.200C3 10.500 1 9 1 6c0-2.500 1.500-4 4-4z"/></symbol>
  <symbol id="v-grid" viewBox="0 0 16 16"><path d="M1 1h14v14H1zM5.500 1v14M10.500 1v14M1 5.500h14M1 10.500h14"/></symbol>
  <symbol id="v-page" viewBox="0 0 16 16"><path d="M1 1h14v14H1zM4 3.500h8v9H4zM6 6h4M6 8h4M6 10h4"/></symbol>
  <symbol id="v-brk" viewBox="0 0 16 16"><path d="M1 1h14v14H1zM5 1v9h10M10 1v9"/></symbol>
  <symbol id="tri-l" viewBox="0 0 10 10"><path fill="currentColor" stroke="none" d="M9 0v10L1 5z"/></symbol>
  <symbol id="tri-r" viewBox="0 0 10 10"><path fill="currentColor" stroke="none" d="M1 0v10l8-5z"/></symbol>
  <symbol id="tri-u" viewBox="0 0 10 10"><path fill="currentColor" stroke="none" d="M0 9h10L5 1z"/></symbol>
  <symbol id="tri-d" viewBox="0 0 10 10"><path fill="currentColor" stroke="none" d="M0 1h10L5 9z"/></symbol>
</svg>

<main class="desk">
<section class="screen screen-a">
  <header class="tabs">
    <button class="tab-list" aria-label="Search tabs"><svg class="i i10"><use href="#chev"/></svg></button>
    <div class="tab"><svg class="i i18"><use href="#ui"/></svg><span>IXP</span><button aria-label="Close"><svg class="i i12"><use href="#x"/></svg></button></div>
    <div class="tab"><svg class="i i18"><use href="#ui"/></svg><span>IXP</span><button aria-label="Close"><svg class="i i12"><use href="#x"/></svg></button></div>
    <div class="tab last"><svg class="i i18"><use href="#ui"/></svg><span>Transactions - UiPath Orchestrator</span><button aria-label="Close"><svg class="i i12"><use href="#x"/></svg></button></div>
    <div class="tab on"><svg class="i i18"><use href="#cloud"/></svg><span>Complaint | Cases | Salesforce</span><button aria-label="Close"><svg class="i i12"><use href="#x"/></svg></button></div>
    <button class="ib w40" aria-label="New tab"><svg class="i i12"><use href="#plus"/></svg></button>
    <div class="winctl"><button aria-label="Minimize"><svg class="i i12"><use href="#minus"/></svg></button><button aria-label="Restore"><svg class="i i12"><use href="#restore"/></svg></button><button aria-label="Close window"><svg class="i i12"><use href="#x"/></svg></button></div>
  </header>
  <div class="tools">
    <button class="ib w40" aria-label="Back"><svg class="i i14"><use href="#back"/></svg></button>
    <button class="ib w40 dim" aria-label="Forward"><svg class="i i14"><use href="#fwd"/></svg></button>
    <button class="ib w40" aria-label="Reload"><svg class="i i14"><use href="#reload"/></svg></button>
    <div class="omni">
      <span class="site"><svg class="i i14"><use href="#tune"/></svg></span>
      <p class="url">eventdemo.lightning.force.com<span>/lightning/o/Case/list?filterName=Complaint</span></p>
      <button class="ib w36" aria-label="Location blocked"><svg class="i i18"><use href="#locoff"/></svg></button>
      <button class="ib w36" aria-label="Zoom"><svg class="i i18"><use href="#zoomout"/></svg></button>
      <button class="ib w36" aria-label="Bookmark"><svg class="i i18"><use href="#star"/></svg></button>
    </div>
    <button class="ib w40" aria-label="UiPath"><svg class="i i18"><use href="#ui-b"/></svg></button>
    <button class="ib w40" aria-label="Grammarly"><svg class="i i18"><use href="#gram"/></svg></button>
    <button class="ib w40" aria-label="Translate"><svg class="i i18"><use href="#trans"/></svg></button>
    <button class="ib w40" aria-label="Extensions"><svg class="i i20"><use href="#puzzle"/></svg></button>
    <span class="rule"></span>
    <button class="ib w40" aria-label="Profile"><span class="face purple">W</span></button>
    <button class="ib w40" aria-label="Menu"><svg class="kebab"><use href="#kebab"/></svg></button>
  </div>

  <div class="sf">
    <div class="sf-top">
      <svg class="sf-logo"><use href="#cloud"/></svg>
      <label class="sf-search"><svg class="i i12"><use href="#mag"/></svg><input type="search" placeholder="Search..." aria-label="Search"></label>
      <div class="sf-acts">
        <span class="favs"><button aria-label="Favorites"><svg class="i i14"><use href="#starf"/></svg></button><button aria-label="Favorites list"><svg class="i i8"><use href="#caret"/></svg></button></span>
        <button class="ib" aria-label="Global actions"><svg class="i i16"><use href="#plusbox"/></svg></button>
        <button class="ib" aria-label="Guidance"><svg class="i i16"><use href="#trail"/></svg></button>
        <button class="ib q" aria-label="Help">?</button>
        <button class="ib" aria-label="Setup"><svg class="i i16"><use href="#gear"/></svg></button>
        <button class="ib" aria-label="Notifications"><svg class="i i16"><use href="#bell"/></svg></button>
        <button class="ib me" aria-label="View profile"><svg class="i i28"><use href="#bear"/></svg></button>
      </div>
    </div>
    <nav class="sf-nav">
      <button class="ib waffle" aria-label="App launcher"><svg class="i i18"><use href="#waffle"/></svg></button>
      <strong>Service</strong>
      <a href="#">Home</a>
      <a href="#">Chatter</a>
      <a href="#">Groups<svg class="i i10"><use href="#chev"/></svg></a>
      <a href="#">Files<svg class="i i10"><use href="#chev"/></svg></a>
      <a href="#">Accounts<svg class="i i10"><use href="#chev"/></svg></a>
      <a href="#">Contacts<svg class="i i10"><use href="#chev"/></svg></a>
      <a href="#" class="on">Cases<svg class="i i10"><use href="#chev"/></svg></a>
      <a href="#">Reports<svg class="i i10"><use href="#chev"/></svg></a>
      <a href="#">Dashboards<svg class="i i10"><use href="#chev"/></svg></a>
      <a href="#">Policies<svg class="i i10"><use href="#chev"/></svg></a>
      <svg class="i i12 tip"><use href="#info"/></svg>
    </nav>
    <div class="sf-stage">
      <div class="sf-card">
        <div class="sf-head">
          <svg class="caseicon"><use href="#case"/></svg>
          <div class="ttl"><p>Cases</p><h1>Complaint <svg class="i i10"><use href="#caret"/></svg><button aria-label="Pin this list"><svg class="i i14"><use href="#pin"/></svg></button></h1></div>
          <div class="btns"><button>New</button><button>Change Owner</button><button>Printable View</button><button>Assign Label</button></div>
        </div>
        <div class="sf-sub">
          <p>3 items • Sorted by Case Number • Filtered by Case Record Type • Updated a few seconds ago</p>
          <div class="lst">
            <label class="lsearch"><svg class="i i12"><use href="#mag"/></svg><input type="search" placeholder="Search this list..." aria-label="Search this list"></label>
            <button class="w37" aria-label="List view controls"><svg class="i i12"><use href="#gear"/></svg><svg class="i i6"><use href="#caret"/></svg></button>
            <button class="w37" aria-label="Display as table"><svg class="i i12"><use href="#cols"/></svg><svg class="i i6"><use href="#caret"/></svg></button>
            <button class="w27" aria-label="Refresh"><svg class="i i12"><use href="#reload"/></svg></button>
            <button class="w27" aria-label="Edit list"><svg class="i i12"><use href="#pencil"/></svg></button>
            <span class="duo"><button class="w27" aria-label="Charts"><svg class="i i12"><use href="#pie"/></svg></button><button class="w27" aria-label="Filters"><svg class="i i12"><use href="#funnel"/></svg></button></span>
          </div>
        </div>
        <table class="cases">
          <colgroup><col class="c-n"><col class="c-ck"><col class="c-no"><col class="c-ct"><col class="c-sub"><col class="c-st"><col class="c-pr"><col class="c-dt"><col class="c-ow"><col class="c-ac"></colgroup>
          <thead><tr>
            <th></th><th><input type="checkbox" aria-label="Select all"></th>
            <th class="bar"><div><span>Case Number <svg class="sort"><use href="#sort"/></svg></span><svg class="i i10"><use href="#chev"/></svg></div></th>
            <th class="bar"><div><span>Contact Name</span><svg class="i i10"><use href="#chev"/></svg></div></th>
            <th class="bar"><div><span>Subject</span><svg class="i i10"><use href="#chev"/></svg></div></th>
            <th><div><span>Status</span><svg class="i i10"><use href="#chev"/></svg></div></th>
            <th class="bar"><div><span>Priority</span><svg class="i i10"><use href="#chev"/></svg></div></th>
            <th><div><span>Date/Time Opened</span><svg class="i i10"><use href="#chev"/></svg></div></th>
            <th class="bar"><div><span>Case O...</span><svg class="i i10"><use href="#chev"/></svg></div></th>
            <th></th>
          </tr></thead>
          <tbody>
            <tr><td class="n">1</td><td><input type="checkbox" aria-label="Select 00001144"></td><td><a href="#">00001144</a></td><td><a href="#">Thanakorn boonlerd</a></td><td><a href="#" class="dot">ร้องเรียนอู่ซ่อม – TIP-000000001</a></td><td>New</td><td>Medium</td><td>6/8/2025, 9:17 PM</td><td><a href="#">PC</a></td><td><button aria-label="Row actions"><svg class="i i10"><use href="#caret"/></svg></button></td></tr>
            <tr><td class="n">2</td><td><input type="checkbox" aria-label="Select 00001145"></td><td><a href="#">00001145</a></td><td><a href="#">Waraporn Boonlert</a></td><td><a href="#" class="dot">ขอร้องเรียนการให้บริการอู่ซ่อม – TIP-000000003 / ทะเบียน LRN-8470</a></td><td>New</td><td>Medium</td><td>6/8/2025, 9:17 PM</td><td><a href="#">PC</a></td><td><button aria-label="Row actions"><svg class="i i10"><use href="#caret"/></svg></button></td></tr>
            <tr><td class="n">3</td><td><input type="checkbox" aria-label="Select 00001146"></td><td><a href="#">00001146</a></td><td><a href="#">Pornchai Mongkol</a></td><td><a href="#" class="dot">ร้องเรียนการบริการอู่ซ่อม – TIP-0000000241 / ทะเบียน 3EA Y18</a></td><td>New</td><td>Medium</td><td>6/8/2025, 9:18 PM</td><td><a href="#">PC</a></td><td><button aria-label="Row actions"><svg class="i i10"><use href="#caret"/></svg></button></td></tr>
          </tbody>
        </table>
        <div class="hscroll"><svg class="i i10"><use href="#tri-l"/></svg><span></span><svg class="i i10"><use href="#tri-r"/></svg></div>
      </div>
    </div>
  </div>

  <footer class="taskbar">
    <div class="wx"><svg class="i i28"><use href="#weather"/></svg><p>94°F<br><span>Mostly cloudy</span></p></div>
    <div class="apps">
      <button aria-label="Start"><svg class="i i25"><use href="#win"/></svg></button>
      <button class="tb-search"><svg class="i i18"><use href="#mag"/></svg>Search</button>
      <button aria-label="Task view"><svg class="i i26"><use href="#tview"/></svg></button>
      <button aria-label="Copilot"><svg class="i i26"><use href="#copilot"/></svg></button>
      <button aria-label="Edge"><svg class="i i26"><use href="#edge"/></svg></button>
      <button class="run" aria-label="File Explorer"><svg class="i i26"><use href="#folder"/></svg></button>
      <button aria-label="Chrome"><svg class="i i26"><use href="#chrome"/></svg></button>
      <button class="run" aria-label="Teams"><svg class="i i32"><use href="#teams"/></svg></button>
      <button class="run now" aria-label="UiPath Studio"><svg class="i i26"><use href="#s-app"/></svg></button>
      <button class="lit" aria-label="Assistant"><svg class="i i26"><use href="#p-app"/></svg></button>
      <button aria-label="Visual Studio Code"><svg class="i i26"><use href="#vscode"/></svg></button>
      <button class="run" aria-label="Chrome W"><svg class="i i26"><use href="#chrome"/></svg><span class="badge purple">W</span></button>
      <button class="run" aria-label="Chrome P"><svg class="i i26"><use href="#chrome"/></svg><span class="badge green">P</span></button>
      <button class="run" aria-label="Assistant settings"><svg class="i i26"><use href="#p-app2"/></svg></button>
      <button class="run" aria-label="Outlook"><svg class="i i26"><use href="#outlook"/></svg></button>
      <button class="run" aria-label="Settings"><svg class="i i26"><use href="#settings"/></svg></button>
      <button class="run" aria-label="Excel"><svg class="i i26"><use href="#xl"/></svg></button>
      <button class="run" aria-label="Recorder"><svg class="i i26"><use href="#play"/></svg></button>
    </div>
    <div class="tray">
      <button class="w34" aria-label="Hidden icons"><svg class="i i14"><use href="#chev-up"/></svg></button>
      <button class="w34 lit" aria-label="Microphone off"><svg class="i i20"><use href="#micoff"/></svg></button>
      <span class="lang">ไทย</span>
      <svg class="i i18"><use href="#wifi"/></svg><svg class="i i18"><use href="#vol"/></svg><svg class="i i18"><use href="#batt"/></svg>
      <p class="clock">2:19 PM<br>6/10/2025</p>
      <svg class="i i18"><use href="#bellz"/></svg>
    </div>
  </footer>
</section>

<section class="screen screen-b">
  <header class="tabs">
    <button class="tab-list" aria-label="Search tabs"><svg class="i i10"><use href="#chev"/></svg></button>
    <div class="tab on"><svg class="i i18"><use href="#gpt-fav"/></svg><span>UiPath Communication Mining integration</span><button aria-label="Close"><svg class="i i12"><use href="#x"/></svg></button></div>
    <div class="tab"><svg class="i i18"><use href="#gdoc"/></svg><span>Untitled document - Google Docs</span><button aria-label="Close"><svg class="i i12"><use href="#x"/></svg></button></div>
    <button class="ib w40" aria-label="New tab"><svg class="i i12"><use href="#plus"/></svg></button>
    <div class="winctl"><button aria-label="Minimize"><svg class="i i12"><use href="#minus"/></svg></button><button aria-label="Restore"><svg class="i i12"><use href="#restore"/></svg></button><button aria-label="Close window"><svg class="i i12"><use href="#x"/></svg></button></div>
  </header>
  <div class="tools">
    <button class="ib w40" aria-label="Back"><svg class="i i14"><use href="#back"/></svg></button>
    <button class="ib w40 dim" aria-label="Forward"><svg class="i i14"><use href="#fwd"/></svg></button>
    <button class="ib w40" aria-label="Reload"><svg class="i i14"><use href="#reload"/></svg></button>
    <div class="omni">
      <span class="site"><svg class="i i14"><use href="#tune"/></svg></span>
      <p class="url">chatgpt.com<span>/c/6847cfc4-b17c-8004-a983-cec383201370</span></p>
      <button class="ib w36" aria-label="Zoom"><svg class="i i18"><use href="#zoomout"/></svg></button>
      <button class="ib w36" aria-label="Bookmark"><svg class="i i18"><use href="#star"/></svg></button>
    </div>
    <button class="ib w40" aria-label="Extensions"><svg class="i i20"><use href="#puzzle"/></svg></button>
    <span class="rule"></span>
    <button class="ib w40" aria-label="Profile"><span class="face green">P</span></button>
    <button class="ib w40" aria-label="Menu"><svg class="kebab"><use href="#kebab"/></svg></button>
  </div>

  <div class="gpt">
    <aside class="side">
      <div class="side-main">
        <div class="side-top"><svg class="i i20"><use href="#gpt"/></svg><svg class="i i18"><use href="#panel"/></svg></div>
        <a href="#"><svg class="i i18"><use href="#compose"/></svg>New chat</a>
        <a href="#"><svg class="i i18"><use href="#mag"/></svg>Search chats</a>
        <a href="#"><svg class="i i18"><use href="#library"/></svg>Library</a>
        <a href="#" class="sep"><svg class="i i18"><use href="#sora"/></svg>Sora</a>
        <a href="#"><svg class="i i18"><use href="#gpts"/></svg>GPTs</a>
        <a href="#"><svg class="i i20"><use href="#ytgpt"/></svg>YouTube Video Summarizer</a>
        <h2>Chats</h2>
        <ul>
          <li class="on"><a href="#">UiPath Communication Mining</a></li>
          <li><a href="#">การยิง API คืออะไร</a></li>
          <li><a href="#">Websites for Box Fields</a></li>
          <li><a href="#">JSON String Syntax Fix</a></li>
          <li><a href="#">JSON Format Conversion</a></li>
          <li><a href="#">แก้ไขข้อมูลประกันภัย</a></li>
          <li><a href="#">ข้อมูลประกันภัยแจ้งข้อผิดพลาด</a></li>
          <li><a href="#">ร้องเรียนอู่ซ่อมรถ</a></li>
          <li><a href="#">ปัญหาบริการอู่ซ่อมรถ</a></li>
          <li><a href="#">ชื่นชมการบริการอู่ซ่อม</a></li>
          <li><a href="#">เทมเพลตข้อความชื่นชม</a></li>
          <li><a href="#">การร้องเรียนและสรุป</a></li>
          <li><a href="#">ข้อเสนอแนะงานซ่อม</a></li>
          <li><a href="#">อีเมลวิริยะประกันภัย</a></li>
        </ul>
        <div class="upgrade"><svg class="i i28"><use href="#spark"/></svg><p>Upgrade plan<br><span>More access to the best models</span></p></div>
      </div>
      <div class="vs"><svg class="i i10"><use href="#tri-u"/></svg><svg class="i i10"><use href="#tri-d"/></svg></div>
      <div class="hs"><svg class="i i8"><use href="#tri-l"/></svg><span></span><svg class="i i8"><use href="#tri-r"/></svg></div>
    </aside>
    <div class="chat">
      <div class="chat-top">
        <strong>ChatGPT</strong>
        <p>มีหลายวิธีที่คุณสามารถเชื่อมต่อและใช้งานระบบนี้ได้ทั้งหมดในขั้นตอนเดียวกันกับที่ตั้งค่าไว้แล้วนั้น และถ้าต้องการให้เชื่อมข้อมูลเพิ่ม</p>
        <button class="share"><svg class="i i18"><use href="#share"/></svg>Share</button>
        <button class="ib" aria-label="More"><svg class="i i18"><use href="#dots"/></svg></button>
        <span class="face blue">PW</span>
      </div>
      <div class="compose-wrap">
        <button class="todown" aria-label="Scroll to bottom"><svg class="i i14"><use href="#down"/></svg></button>
        <div class="composer">
          <div class="line"><input type="text" placeholder="Ask anything" aria-label="Ask anything"><svg class="gb"><use href="#gbadge"/></svg></div>
          <div class="line"><button class="ib" aria-label="Add"><svg class="i i14"><use href="#plus"/></svg></button><button class="tl"><svg class="i i14"><use href="#sliders"/></svg>Tools</button><button class="ib mic" aria-label="Dictate"><svg class="mico"><use href="#mic"/></svg></button><button class="voice" aria-label="Voice mode"><svg class="i i14"><use href="#wave"/></svg></button></div>
        </div>
        <p class="note">ChatGPT can make mistakes. Check important info.</p>
      </div>
    </div>
    <div class="vs main-vs"><svg class="i i10"><use href="#tri-u"/></svg><span></span><svg class="i i10"><use href="#tri-d"/></svg></div>
  </div>

  <footer class="taskbar">
    <div class="wx"><svg class="i i28"><use href="#weather"/></svg><p>94°F<br><span>Mostly cloudy</span></p></div>
    <div class="apps">
      <button aria-label="Start"><svg class="i i25"><use href="#win"/></svg></button>
      <button class="tb-search"><svg class="i i18"><use href="#mag"/></svg>Search</button>
      <button aria-label="Task view"><svg class="i i26"><use href="#tview"/></svg></button>
      <button aria-label="Copilot"><svg class="i i26"><use href="#copilot"/></svg></button>
      <button aria-label="Edge"><svg class="i i26"><use href="#edge"/></svg></button>
      <button class="run" aria-label="File Explorer"><svg class="i i26"><use href="#folder"/></svg></button>
      <button aria-label="Chrome"><svg class="i i26"><use href="#chrome"/></svg></button>
      <button class="run" aria-label="Teams"><svg class="i i32"><use href="#teams"/></svg></button>
      <button class="run now" aria-label="UiPath Studio"><svg class="i i26"><use href="#s-app"/></svg></button>
      <button aria-label="Assistant"><svg class="i i26"><use href="#p-app"/></svg></button>
      <button aria-label="Visual Studio Code"><svg class="i i26"><use href="#vscode"/></svg></button>
      <button class="run" aria-label="Chrome W"><svg class="i i26"><use href="#chrome"/></svg><span class="badge purple">W</span></button>
      <button class="run" aria-label="Chrome P"><svg class="i i26"><use href="#chrome"/></svg><span class="badge green">P</span></button>
      <button class="run" aria-label="Assistant settings"><svg class="i i26"><use href="#p-app2"/></svg></button>
      <button class="run" aria-label="Outlook"><svg class="i i26"><use href="#outlook"/></svg></button>
      <button class="run" aria-label="Settings"><svg class="i i26"><use href="#settings"/></svg></button>
      <button class="run" aria-label="Excel"><svg class="i i26"><use href="#xl"/></svg></button>
      <button class="run" aria-label="Recorder"><svg class="i i26"><use href="#play"/></svg></button>
    </div>
    <div class="tray plain"><p class="clock">2:19 PM<br>6/10/2025</p></div>
  </footer>

  <section class="excel">
    <header class="x-title">
      <div class="x-left">
        <svg class="i i18"><use href="#xl"/></svg>
        <span class="auto">AutoSave</span>
        <button class="tog" role="switch" aria-checked="false"><i></i>Off</button>
        <button class="ib w40" aria-label="Save"><svg class="i i18"><use href="#save"/></svg></button>
        <button class="ib w28" aria-label="Undo"><svg class="i i18"><use href="#undo"/></svg></button><svg class="i c14"><use href="#chev"/></svg>
        <button class="ib w28" aria-label="Redo"><svg class="i i18"><use href="#redo"/></svg></button><svg class="i c14"><use href="#chev"/></svg>
        <button class="ib w28" aria-label="Customize toolbar"><svg class="i i8"><use href="#qat"/></svg></button>
        <span class="nm">Excel</span>
      </div>
      <label class="x-search"><svg class="i i16"><use href="#mag-l"/></svg><input type="search" placeholder="Search" aria-label="Search"></label>
      <div class="x-right"><span class="face brown">WW</span><button aria-label="Minimize"><svg class="i i12"><use href="#minus"/></svg></button><button aria-label="Maximize"><svg class="i i12"><use href="#max"/></svg></button><button aria-label="Close"><svg class="i i14"><use href="#x"/></svg></button></div>
    </header>
    <nav class="x-tabs"><a href="#">File</a><a href="#" class="on">Home</a><a href="#">Insert</a><a href="#">Page Layout</a><a href="#">Formulas</a><a href="#">Data</a><a href="#">Review</a><a href="#">View</a><a href="#">Automate</a><a href="#">Help</a><button class="cmt"><svg class="i i14"><use href="#comment"/></svg>Comments</button></nav>
    <div class="ribbon">
      <div class="grp g-clip"><div class="body">
          <button class="big"><svg class="i paste"><use href="#paste"/></svg>Paste<svg class="i i8"><use href="#chev"/></svg></button>
          <div class="rows3"><button class="b28" aria-label="Cut"><svg class="i i18"><use href="#cut"/></svg></button><button class="b28" aria-label="Copy"><svg class="i i18"><use href="#copy"/></svg></button><button class="b28" aria-label="Format painter"><svg class="i i18"><use href="#brush"/></svg></button></div>
          <svg class="i c14 copychev"><use href="#chev"/></svg>
        </div><p class="go lit-l">Clipboard<svg class="i i10"><use href="#launch"/></svg></p></div>
      <div class="grp g-font"><div class="body two">
          <div class="row"><span class="sel s-a"><select aria-label="Font"><option></option></select><svg class="i i8"><use href="#chev"/></svg></span><span class="sel s-b"><select aria-label="Font size"><option></option></select><svg class="i i8"><use href="#chev"/></svg></span><button class="b28 big-a" aria-label="Increase font size">A<svg class="i i6"><use href="#chev-up"/></svg></button><button class="b28 sm-a" aria-label="Decrease font size">A<svg class="i i6"><use href="#chev"/></svg></button></div>
          <div class="row"><button class="b28 tb">B</button><button class="b28 ti">I</button><button class="b28 tu">U</button><svg class="i c14"><use href="#chev"/></svg><s></s><button class="b28" aria-label="Borders"><svg class="i i18"><use href="#bord"/></svg></button><svg class="i c14"><use href="#chev"/></svg><s></s><button class="b28" aria-label="Fill colour"><svg class="i i18"><use href="#fill"/></svg></button><svg class="i c14"><use href="#chev"/></svg><button class="b28" aria-label="Font colour"><svg class="i i18"><use href="#fcol"/></svg></button><svg class="i c14"><use href="#chev"/></svg></div>
        </div><p class="go">Font<svg class="i i10"><use href="#launch"/></svg></p></div>
      <div class="grp g-align"><div class="body">
          <div class="two w146">
            <div class="row"><button class="b28" aria-label="Top align"><svg class="i i18"><use href="#a-top"/></svg></button><button class="b28" aria-label="Middle align"><svg class="i i18"><use href="#a-mid"/></svg></button><button class="b28" aria-label="Bottom align"><svg class="i i18"><use href="#a-bot"/></svg></button><button class="b28" aria-label="Orientation"><svg class="i i20"><use href="#orient"/></svg></button><svg class="i c14"><use href="#chev"/></svg></div>
            <div class="row"><button class="b28" aria-label="Align left"><svg class="i i18"><use href="#a-l"/></svg></button><button class="b28" aria-label="Center"><svg class="i i18"><use href="#a-c"/></svg></button><button class="b28" aria-label="Align right"><svg class="i i18"><use href="#a-r"/></svg></button><button class="b28" aria-label="Decrease indent"><svg class="i i18"><use href="#ind-l"/></svg></button><button class="b28" aria-label="Increase indent"><svg class="i i18"><use href="#ind-r"/></svg></button></div>
          </div>
          <div class="two tall">
            <div class="row"><button class="b28" aria-label="Wrap text"><svg class="i i18"><use href="#wrap"/></svg></button></div>
            <div class="row"><button class="b28" aria-label="Merge"><svg class="i i18"><use href="#merge"/></svg></button><svg class="i c14 far"><use href="#chev"/></svg></div>
          </div>
        </div><p class="go">Alignment<svg class="i i10"><use href="#launch"/></svg></p></div>
      <div class="grp g-num"><div class="body rows3">
          <div class="row"><span class="sel s-c"><select aria-label="Number format"><option>General</option></select><svg class="i i8"><use href="#chev"/></svg></span></div>
          <div class="row big-t"><button class="b28">$</button><svg class="i c14"><use href="#chev"/></svg><button class="b28">%</button><button class="b28" aria-label="Comma style"><svg class="comma"><use href="#comma"/></svg></button></div>
          <div class="row"><button class="b28" aria-label="Increase decimal"><svg class="i i20"><use href="#dec-i"/></svg></button><button class="b28" aria-label="Decrease decimal"><svg class="i i20"><use href="#dec-d"/></svg></button></div>
        </div><p class="go">Number<svg class="i i10"><use href="#launch"/></svg></p></div>
      <div class="grp g-sty"><div class="body rows3">
          <button class="row"><svg class="i i18"><use href="#cf"/></svg>Conditional Formatting<svg class="i c14"><use href="#chev"/></svg></button>
          <button class="row"><svg class="i i18"><use href="#ft"/></svg>Format as Table<svg class="i c14"><use href="#chev"/></svg></button>
          <button class="row"><svg class="i i18"><use href="#cs"/></svg>Cell Styles<svg class="i c14"><use href="#chev"/></svg></button>
        </div><p>Styles</p></div>
      <div class="grp g-cell"><div class="body rows3">
          <button class="row"><svg class="i i18"><use href="#ins"/></svg><span>Insert</span><svg class="i c14"><use href="#chev"/></svg></button>
          <button class="row"><svg class="i i18"><use href="#del"/></svg><span>Delete</span><svg class="i c14"><use href="#chev"/></svg></button>
          <button class="row"><svg class="i i18"><use href="#fmt"/></svg>Format<svg class="i c14"><use href="#chev"/></svg></button>
        </div><p>Cells</p></div>
      <div class="grp g-edit"><div class="body rows3">
          <div class="row"><button class="b28" aria-label="AutoSum"><svg class="i i18"><use href="#sigma"/></svg></button><svg class="i c14 wide"><use href="#chev"/></svg><button class="b28" aria-label="Sort and filter"><svg class="i i18"><use href="#az"/></svg></button><svg class="i c14"><use href="#chev"/></svg></div>
          <div class="row"><button class="b28" aria-label="Fill"><svg class="i i18"><use href="#filld"/></svg></button><svg class="i c14 near"><use href="#chev"/></svg><button class="b28" aria-label="Find"><svg class="i i18"><use href="#mag-l"/></svg></button><svg class="i c14"><use href="#chev"/></svg></div>
          <div class="row"><button class="b28" aria-label="Clear"><svg class="i i18"><use href="#erase"/></svg></button><svg class="i c14 near"><use href="#chev"/></svg></div>
        </div><p>Editing</p></div>
      <div class="grp g-sens"><div class="body"><button class="big"><svg class="i i32"><use href="#sens"/></svg>Sensitivity<svg class="i i8"><use href="#chev"/></svg></button></div><p>Sensitivity</p></div>
      <div class="grp g-add"><div class="body"><button class="big faint"><svg class="i i32"><use href="#addin"/></svg>Add-ins</button></div><p>Add-ins</p></div>
      <div class="grp g-ana"><div class="body"><button class="big"><svg class="i i32"><use href="#analyze"/></svg>Analyze<br>Data</button></div></div>
      <button class="fold" aria-label="Collapse ribbon"><svg class="i i12"><use href="#chev"/></svg></button>
    </div>
    <div class="fbar">
      <span class="namebox"><input type="text" aria-label="Name box"><svg class="i i12"><use href="#chev"/></svg></span>
      <svg class="kebab"><use href="#kebab"/></svg>
      <div class="fx"><svg class="i i16"><use href="#x"/></svg><svg class="chk"><use href="#check"/></svg><em>fx</em><svg class="i i12"><use href="#chev"/></svg></div>
      <div class="fin"><textarea aria-label="Formula bar"></textarea><svg class="i i12"><use href="#chev-up"/></svg></div>
    </div>
    <div class="x-void"></div>
    <footer class="x-status"><span class="rd">Ready</span><svg class="i i16"><use href="#v-grid"/></svg><svg class="i i16"><use href="#v-page"/></svg><svg class="i i16"><use href="#v-brk"/></svg><div class="zm"><svg class="i i10"><use href="#minus"/></svg><input type="range" aria-label="Zoom level"><svg class="i i10"><use href="#plus"/></svg></div><span>100%</span></footer>
  </section>
</section>
</main>
</body>
</html>
```
FILE: styles.css
```css
* { box-sizing: border-box; }
body { margin: 0; background: #000; font: 12px/16px "Open Sans", "Noto Sans", "Noto Sans Thai", sans-serif; color: #fff; }
p, h1, h2, ul { margin: 0; padding: 0; list-style: none; }
a { color: inherit; text-decoration: none; }
button, input, select, textarea { font: inherit; color: inherit; background: none; border: 0; padding: 0; margin: 0; outline: 0; min-width: 0; }
input::-webkit-search-cancel-button { display: none; }
.defs { position: absolute; width: 0; height: 0; visibility: hidden; }
svg { display: block; flex: none; fill: none; stroke: none; }
.i, .kebab, .chk, .sort, .mico { stroke: currentColor; stroke-width: 1.2; }
.i6 { width: 6px; height: 6px; stroke-width: 2; }
.i8 { width: 8px; height: 8px; }
.i10 { width: 10px; height: 10px; }
.i12 { width: 12px; height: 12px; }
.i14 { width: 14px; height: 14px; }
.i16 { width: 16px; height: 16px; }
.i18 { width: 18px; height: 18px; }
.i20 { width: 20px; height: 20px; }
.i25 { width: 25px; height: 25px; }
.i26 { width: 26px; height: 26px; }
.i28 { width: 28px; height: 28px; }
.i32 { width: 32px; height: 32px; }
.c14 { width: 14px; height: 8px; color: #6d6d6d; }
.kebab { width: 4px; height: 18px; }
.ib { display: flex; align-items: center; justify-content: center; flex: none; width: 28px; }
.w28 { width: 28px; }
.w36 { width: 36px; }
.w40 { width: 40px; }
.face { display: flex; align-items: center; justify-content: center; width: 23px; height: 23px; border-radius: 50%; font-size: 11px; flex: none; color: #fff; }
.purple { background: #ab47bc; }
.green { background: #689f38; }
.blue { background: #339cff; }
.brown { background: #613c30; }

.desk { display: flex; min-height: 100vh; }
.screen { flex: 1 1 0; min-width: 0; display: flex; flex-direction: column; position: relative; }
.screen-a { margin-bottom: 104px; }
.screen-b { margin-top: 104px; }

/* browser chrome */
.tabs { display: flex; align-items: stretch; height: 44px; padding: 7px 0 0 7px; background: #262b36; color: #c7cbd4; }
.tab-list { width: 29px; height: 30px; border-radius: 10px; background: #36383d; margin-right: 5px; display: flex; align-items: center; justify-content: center; color: #e8eaed; flex: none; }
.tab-list .i { stroke-width: 1.8; }
.tab { display: flex; align-items: center; width: 263px; height: 30px; padding: 0 15px 0 12px; position: relative; }
.tab span { flex: 1; margin-left: 9px; overflow: hidden; white-space: nowrap; margin-right: 12px; -webkit-mask-image: linear-gradient(90deg, #000 88%, transparent); mask-image: linear-gradient(90deg, #000 88%, transparent); }
.tab button .i { stroke-width: 1.6; }
.tab::after { content: ""; position: absolute; right: 0; top: 6px; height: 18px; width: 2px; background: #3b404c; }
.tab.last::after { display: none; }
.tab.on { width: 258px; height: 37px; padding: 0 13px 7px 10px; margin-left: 2px; background: #333b4b; border-radius: 10px 10px 0 0; color: #e6e9ef; }
.tab.on span { -webkit-mask-image: none; mask-image: none; margin-right: 4px; }
.tab.on::after, .tab.on::before { content: ""; display: block; position: absolute; width: 10px; height: 10px; top: 27px; background: radial-gradient(circle at 0 0, transparent 10px, #333b4b 10px); }
.tab.on::before { left: -10px; }
.tab.on::after { right: -10px; background: radial-gradient(circle at 100% 0, transparent 10px, #333b4b 10px); }
.tab.on .i12, .tabs > .ib .i { color: #e6e9ef; stroke-width: 1.6; }
.tabs > .ib { height: 30px; }
.winctl { margin-left: auto; display: flex; height: 30px; color: #8d929d; }
.winctl button { width: 51px; display: flex; align-items: center; justify-content: center; }
.winctl .i { stroke-width: 1; }
.screen-b .tab.on { width: 257px; margin-left: 3px; padding-right: 12px; }
.screen-b .tab.on span { -webkit-mask-image: linear-gradient(90deg, #000 94%, transparent); mask-image: linear-gradient(90deg, #000 94%, transparent); margin-right: 16px; }
.screen-b .tab:not(.on) { margin-left: 4px; }
.tools { display: flex; align-items: center; height: 52px; padding: 0 4px; background: #333b4b; border-bottom: 1px solid #454b59; color: #c3cadb; }
.tools .i { stroke-width: 1.7; }
.dim { color: #6d7585; }
.omni { flex: 1; min-width: 0; display: flex; align-items: center; height: 37px; border-radius: 19px; background: #1e2636; padding: 0 8px 0 5px; margin: 0 9px 0 10px; }
.site { width: 26px; height: 26px; border-radius: 50%; background: #333b4b; display: flex; align-items: center; justify-content: center; color: #e6e9ef; }
.url { flex: 1; margin-left: 8px; font-size: 15px; line-height: 22px; color: #e8eaf0; white-space: nowrap; overflow: hidden; }
.url span { color: #b9bfcc; }
.rule { width: 1px; height: 18px; background: #555d6e; margin: 0 9px; }

/* Salesforce */
.sf { flex: 1; display: flex; flex-direction: column; background: #fff; color: #181818; font-size: 10px; line-height: 14px; }
.sf-top { display: grid; grid-template-columns: 13fr 331px 14fr; align-items: center; height: 41px; padding: 0 14px; }
.sf-logo { width: 33px; height: 24px; }
.sf-search, .lsearch { display: flex; align-items: center; height: 27px; border: 1px solid #747474; border-radius: 4px; background: #fff; padding: 0 12px; gap: 8px; color: #706e6b; }
.sf-search input, .lsearch input { flex: 1; }
input::placeholder { color: #747474; opacity: 1; }
.sf-acts { display: flex; align-items: center; justify-content: flex-end; color: #919191; }
.favs { display: flex; border: 1px solid #919191; border-radius: 4px; height: 20px; width: 35px; margin-right: 7px; }
.favs button { flex: 1 1 18px; display: flex; align-items: center; justify-content: center; }
.favs button + button { flex-basis: 13px; border-left: 1px solid #919191; }
.q { font-size: 20px; font-weight: 600; line-height: 20px; }
.me { margin-left: 8px; width: 30px; }
.sf-nav { display: flex; align-items: stretch; height: 34px; border-bottom: 2px solid #0070d2; padding-left: 19px; }
.sf-nav strong { font-size: 14px; font-weight: 400; line-height: 32px; margin: 0 22px 0 9px; }
.sf-nav a { display: flex; align-items: center; gap: 11px; padding: 0 10px; }
.sf-nav .i10 { color: #747474; stroke-width: 1.6; }
.sf-nav .on { background: #e5eff9; border-top: 3px solid #0070d2; padding: 0 11px 3px; }
.sf-nav .tip { margin: 11px 13px 0 auto; color: #5c5c5c; }
.sf-stage { flex: 1; display: flex; padding: 9px 10px 0;
  background: url("data:image/svg+xml,%3Csvg xmlns='http://www.w3.org/2000/svg' width='370' height='10' fill='none' stroke='%23ffffff' stroke-opacity='.25'%3E%3Cpath d='M5 10 12 1M20 1v9M26 1l3 9M34 1l5 9M60 10C62 4 66 2 70 1M90 10 98 1M98 10l8-9M106 10l8-9M130 4c5-4 10-2 14 4M150 1l4 9M162 1v9M176 10c0-5 2-8 6-9M196 10c1-6 5-8 8-9M216 1c0 4 3 7 6 9M228 1l8 9M236 1l7 9M244 1l5 9M252 1l2 9M276 1l3 9M284 1l2 9M291 1v9M298 10l1-9M306 10c1-5 5-8 9-9M340 1l2 9M348 1l4 9M357 1l6 9'/%3E%3C/svg%3E") repeat-x 0 0,
  linear-gradient(#1b5f9f, #2465a5 50px, #6c97c9 110px, #b0c4df 180px); }
.sf-card { flex: 1; display: flex; flex-direction: column; background: #f3f3f3; border: 1px solid #c9c9c9; border-bottom: 0; border-radius: 3px 3px 0 0; min-width: 0; }
.sf-head { display: flex; padding: 14px 12px 0 13px; height: 50px; }
.caseicon { width: 28px; height: 26px; }
.ttl { flex: 1; margin-left: 9px; line-height: 12px; }
.ttl h1 { display: flex; align-items: center; gap: 9px; font-size: 14px; font-weight: 700; line-height: 20px; }
.ttl h1 button { width: 20px; height: 20px; border: 1px solid #747474; border-radius: 4px; background: #fff; color: #747474; margin-left: 4px; display: flex; align-items: center; justify-content: center; }
.ttl p { line-height: 11px; margin-bottom: 4px; }
.btns { display: flex; height: 27px; margin-top: 4px; border: 1px solid #747474; border-radius: 4px; background: #fff; color: #0070d2; overflow: hidden; }
.btns button { padding: 0 14px; }
.btns button + button { border-left: 1px solid #747474; }
.sf-sub { display: flex; justify-content: space-between; height: 42px; padding: 3px 12px 0 13px; }
.sf-sub p { padding-top: 15px; }
.lst { display: flex; gap: 3px; color: #747474; }
.lsearch { width: 199px; margin-right: 4px; padding: 0 9px; }
.lst button { height: 27px; border: 1px solid #747474; border-radius: 4px; background: #fff; display: flex; align-items: center; justify-content: center; gap: 6px; }
.w37 { width: 37px; }
.w27 { width: 27px; }
.lst .duo { display: flex; }
.duo button:first-child { border-radius: 4px 0 0 4px; }
.duo button + button { border-radius: 0 4px 4px 0; margin-left: -1px; }
.cases { width: 100%; table-layout: fixed; border-collapse: separate; border-spacing: 0; border-top: 1px solid #c9c9c9; }
.c-n { width: 46px; } .c-ck { width: 24px; } .c-no { width: 154px; } .c-ct { width: 284px; } .c-sub { width: auto; }
.c-st { width: 126px; } .c-pr { width: 165px; } .c-dt { width: 240px; } .c-ow { width: 84px; } .c-ac { width: 39px; }
.cases th, .cases td { padding: 0 0 0 7px; text-align: left; border-bottom: 1px solid #c9c9c9; white-space: nowrap; }
.cases th { height: 29px; font-size: 11px; font-weight: 600; color: #3e3e3c; border-bottom-color: #aeaeae; }
.cases th > div { display: flex; align-items: center; justify-content: space-between; padding-right: 12px; }
.cases th .i { color: #747474; stroke-width: 1.5; }
.cases th.bar { border-right: 1px solid #aeaeae; }
.cases th span { display: flex; align-items: center; gap: 4px; }
.sort { width: 8px; height: 10px; }
.cases td { height: 25px; background: #fff; }
.cases td.n { text-align: right; padding-right: 17px; color: #444; }
.cases td a { color: #0b5cab; }
.cases td .dot { border-bottom: 1px dotted #0b5cab; font-size: 11px; }
.cases input { display: block; appearance: none; width: 13px; height: 13px; margin-left: -3px; border: 1px solid #747474; border-radius: 2px; background: #fff; }
.cases td button { display: flex; align-items: center; justify-content: center; width: 16px; height: 16px; border: 1px solid #747474; border-radius: 4px; color: #747474; }
.hscroll { margin-top: auto; height: 17px; background: #fcfcfc; display: flex; align-items: center; padding: 0 5px; gap: 6px; color: #8b8b8b; }
.hscroll span { flex: 1; height: 9px; border-radius: 5px; background: #8b8b8b; }

/* taskbar */
.taskbar { display: grid; grid-template-columns: 1fr auto 1fr; height: 53px; flex: none; background: #003e92; border-top: 1px solid #2f5f9f; font-size: 13px; line-height: 18px; }
.wx { display: flex; align-items: center; padding-left: 21px; gap: 6px; white-space: nowrap; }
.wx .i { stroke: none; margin-top: -6px; }
.wx span { color: #b9cbe6; }
.apps { display: flex; align-items: center; }
.apps button { width: 48px; height: 46px; display: flex; align-items: center; justify-content: center; position: relative; }
.apps .i { stroke: none; }
.apps .tb-search { width: 243px; height: 35px; border-radius: 18px; margin: 0 3px; background: #275aa4; border: 1px solid #3e6db2; justify-content: flex-start; padding-left: 11px; gap: 11px; font-size: 14px; color: #d6e2f3; }
.apps .tb-search .i { stroke: #fff; stroke-width: 1.5; }
.run::after { content: ""; position: absolute; bottom: 2px; left: 21px; width: 6px; height: 3px; border-radius: 2px; background: #9db3d6; }
.now::after { left: 15px; width: 18px; background: #4cc2ff; }
.now, .lit { background: #154b98; border-radius: 5px; box-shadow: inset 0 0 0 1px #2457a0; }
.apps .now, .apps .lit { width: 42px; height: 44px; margin: 0 3px; }
.apps .now::after { left: 12px; bottom: 1px; }
.badge { position: absolute; top: -1px; right: 3px; width: 17px; height: 17px; border-radius: 50%; font-size: 10px; line-height: 17px; text-align: center; }
.tray { display: flex; align-items: center; justify-content: flex-end; padding-right: 22px; gap: 10px; }
.tray.plain { padding-right: 26px; }
.w34 { width: 34px; height: 44px; display: flex; align-items: center; justify-content: center; margin-right: -8px; }
.w34.lit { margin-right: 4px; }
.lang { font-size: 12px; margin-right: 15px; }
.clock { text-align: right; margin-left: 8px; }
.tray .clock + .i { margin-left: -2px; }
.plain .clock { color: #d3def0; }

/* ChatGPT */
.gpt { flex: 1; display: flex; background: #212121; font-size: 13px; line-height: 18px; min-height: 0; position: relative; }
.side { width: 258px; flex: none; display: grid; grid-template: 1fr 15px / 241px 16px; background: #181818; border-right: 1px solid #262626; color: #f3f3f3; }
.side-main { display: flex; flex-direction: column; padding-left: 6px; min-width: 0; }
.side-top { display: flex; justify-content: space-between; align-items: center; height: 52px; padding: 0 15px 0 10px; margin-bottom: 8px; }
.side-main > a { display: flex; align-items: center; gap: 7px; height: 35px; padding-left: 11px; white-space: nowrap; overflow: hidden; }
.side-main > a .i20 { margin: 0 -1px; }
.side-main > .sep { margin-top: 22px; }
.side h2 { font-size: 13px; font-weight: 400; color: #afafaf; margin: 31px 0 9px 10px; line-height: 18px; }
.side ul { flex: 1 1 0; display: grid; grid-auto-rows: 1fr; margin-bottom: -3px; }
.side li { display: flex; align-items: center; padding-left: 10px; border-radius: 10px; white-space: nowrap; overflow: hidden; margin-right: 8px; }
.side li.on { background: #242424; }
.upgrade { display: flex; align-items: center; height: 68px; border-top: 1px solid #2b2b2b; margin-left: -6px; padding-left: 19px; gap: 8px; background: #181818; position: relative; font-weight: 500; line-height: 19px; }
.upgrade span { font-size: 11px; font-weight: 400; color: #afafaf; }
.vs { display: flex; flex-direction: column; justify-content: space-between; align-items: center; padding: 4px 0; color: #444; }
.side .vs { padding-bottom: 6px; }
.hs { display: flex; align-items: center; padding: 0 8px 0 5px; gap: 6px; color: #4b4b4b; }
.hs span { flex: 1; height: 9px; border-radius: 5px; background: #454545; }
.chat { flex: 1; display: flex; flex-direction: column; justify-content: space-between; min-width: 0; margin-right: -16px; }
.chat-top { display: flex; align-items: center; height: 52px; padding: 0 13px 0 20px; }
.chat-top strong { font-size: 18px; font-weight: 500; }
.chat-top p { flex: 1; margin-left: 353px; font-size: 15px; white-space: nowrap; overflow: hidden; line-height: 32px; padding-right: 280px; }
.chat-top .blue { width: 28px; height: 28px; font-size: 12px; margin-left: 9px; }
.share { display: flex; align-items: center; gap: 6px; height: 36px; width: 84px; padding-left: 12px; border: 1px solid #424242; border-radius: 18px; font-weight: 600; margin-right: 13px; }
.chat-top .ib { color: #fff; }
.compose-wrap { display: flex; flex-direction: column; align-items: center; }
.todown { width: 32px; height: 32px; border-radius: 50%; border: 1px solid #454545; margin-bottom: 8px; display: flex; align-items: center; justify-content: center; }
.composer { width: 762px; height: 103px; border-radius: 28px; background: #303030; padding: 12px 10px 10px 20px; display: flex; flex-direction: column; justify-content: space-between; }
.line { display: flex; align-items: center; height: 36px; }
.line input { flex: 1; font-size: 15px; }
.line input::placeholder { color: #afafaf; }
.gb { width: 44px; height: 24px; margin: -5px 10px 0 0; }
.line .ib { width: 14px; }
.tl { display: flex; align-items: center; gap: 8px; font-weight: 500; margin-left: 23px; }
.line .mic { margin-left: auto; width: 16px; }
.mico { width: 14px; height: 18px; }
.voice { width: 35px; height: 35px; border-radius: 50%; background: #505050; display: flex; align-items: center; justify-content: center; margin-left: 15px; }
.note { font-size: 11px; line-height: 31px; }
.main-vs { width: 16px; position: relative; padding-bottom: 114px; }
.main-vs span { width: 9px; height: 105px; border-radius: 5px; background: #454545; margin-top: 438px; }

/* Excel window floating over the browser */
.excel { position: absolute; left: 161px; right: 333px; top: 116px; bottom: 223px; display: flex; flex-direction: column; background: #0a0a0a; border: 1px solid #606060; border-radius: 9px; overflow: hidden; box-shadow: 0 10px 30px rgba(0, 0, 0, .45); color: #777; }
.x-title { display: grid; grid-template-columns: 1fr 382px 1fr; align-items: center; height: 54px; padding-left: 17px; }
.x-left { display: flex; align-items: center; font-size: 11px; }
.auto { margin: 0 10px 0 17px; }
.tog { width: 46px; height: 22px; border: 1px solid #6d6d6d; border-radius: 11px; display: flex; align-items: center; justify-content: space-between; padding: 0 6px 0 3px; margin-right: 3px; }
.tog i { width: 15px; height: 15px; border-radius: 50%; background: #606060; }
.nm { margin-left: 14px; }
.x-search { display: flex; align-items: center; height: 34px; border: 1px solid #444; border-radius: 5px; background: #141414; padding-left: 14px; gap: 15px; font-size: 14px; }
.x-search input { flex: 1; }
.x-search input::placeholder { color: #777; }
.x-right { display: flex; justify-content: flex-end; align-items: center; }
.x-right button { width: 53px; height: 40px; display: flex; align-items: center; justify-content: center; }
.x-right .face { width: 27px; height: 27px; color: #d8ccc8; margin-right: 12px; }
.x-tabs { display: flex; align-items: center; height: 32px; padding: 0 12px 2px 23px; font-size: 14px; color: #f0f0f0; gap: 23px; }
.x-tabs a { line-height: 20px; border-bottom: 2px solid transparent; }
.x-tabs .on { font-weight: 600; border-color: #60c689; }
.x-tabs a:first-child { margin-right: 5px; }
.cmt { margin-left: auto; display: flex; align-items: center; justify-content: center; gap: 4px; width: 99px; height: 27px; border: 1px solid #444; border-radius: 5px; color: #666; }
.ribbon { display: flex; align-items: flex-start; height: 108px; flex: none; margin: 0 9px; padding-top: 5px; border-radius: 8px; background: #292929; font-size: 12px; color: #666; overflow: hidden; }
.grp { flex: none; height: 98px; border-right: 1px solid #5c5c5c; display: flex; flex-direction: column; }
.grp > p { position: relative; text-align: center; color: #f0f0f0; font-size: 11px; line-height: 20px; height: 16px; }
.grp > .go { padding-right: 16px; }
.grp > p .i { position: absolute; right: 5px; top: 6px; color: #6d6d6d; }
.grp > .lit-l .i { color: #f0f0f0; }
.body { height: 84px; margin-top: -2px; display: flex; }
.grp .i { color: #9b9b9b; }
.grp .i8, .grp .c14 { color: #6d6d6d; }
.two { display: block; padding-top: 5px; }
.row { display: flex; align-items: center; height: 28px; }
.two .row { height: 34px; }
.rows3 { display: block; }
.b28 { width: 28px; height: 28px; display: flex; align-items: center; justify-content: center; color: #9b9b9b; flex: none; }
.g-clip { width: 123px; } .g-font { width: 254px; } .g-align { width: 222px; } .g-num { width: 115px; } .g-sty { width: 200px; }
.g-cell { width: 118px; } .g-edit { width: 116px; } .g-sens { width: 80px; } .g-add { width: 69px; } .g-ana { width: 68px; }
.big { width: 100%; display: flex; flex-direction: column; align-items: center; text-align: center; padding-top: 6px; line-height: 17px; }
.big .i32, .paste { margin-bottom: 4px; }
.big .i8 { margin-top: 2px; }
.paste { width: 30px; height: 32px; }
.g-clip .big { width: 50px; margin-left: 10px; }
.g-clip .copychev { margin: 38px 0 0 5px; }
.g-font { padding-left: 8px; }
.g-font .body .row:last-child { margin-left: -1px; }
.g-font > p, .g-num > p { margin-left: -8px; }
.sel { position: relative; display: flex; align-items: center; height: 26px; background: #141414; border: 1px solid #3f3f3f; border-radius: 5px; }
.sel select { appearance: none; width: 100%; height: 100%; padding-left: 3px; font-size: 11px; }
.sel .i { position: absolute; right: 3px; }
.s-a { width: 122px; margin-right: 4px; }
.s-b { width: 53px; margin-right: 2px; }
.s-c { width: 97px; }
.big-a, .sm-a { font-size: 17px; align-items: center; }
.sm-a { font-size: 14px; }
.big-a .i, .sm-a .i { margin-bottom: 8px; }
.tb { font-weight: 700; font-size: 14px; }
.ti { font: italic 15px "Liberation Serif", serif; }
.tu { text-decoration: underline; font-size: 14px; }
.row s { width: 1px; height: 26px; margin: 0 2px; background: #5c5c5c; }
.g-align .body { padding-left: 6px; }
.w146 { width: 146px; }
.tall { border-left: 1px solid #5c5c5c; height: 66px; margin-top: 9px; padding: 0 0 0 5px; }
.tall .row { margin-top: -4px; height: 37px; }
.far { margin-left: 6px; }
.g-num { padding-left: 8px; }
.big-t .b28 { font-size: 18px; }
.comma { width: 10px; height: 18px; }
.g-sty .row, .g-cell .row { padding-left: 12px; gap: 4px; }
.g-cell span { min-width: 46px; text-align: left; }
.g-edit .body { padding-left: 8px; }
.wide { margin: 0 8px 0 5px; }
.near { margin: 0 15px 0 -2px; }
.faint .i { color: #666; }
.fold { margin: 82px 10px 0 auto; color: #fff; }
.fbar { display: flex; align-items: flex-start; padding: 8px 8px 0 9px; color: #a0a0a0; }
.namebox, .fx { display: flex; align-items: center; height: 26px; border: 1px solid #5c5c5c; border-radius: 4px; background: #292929; }
.namebox { width: 110px; padding-right: 6px; color: #ddd; }
.namebox input { flex: 1; }
.fbar .kebab { margin: 4px 10px 0; width: 3px; height: 16px; color: #ddd; }
.fx { width: 93px; justify-content: space-between; padding: 0 2px 0 5px; }
.fx em { font: italic 19px "Liberation Serif", serif; color: #bbb; }
.fx .i16, .chk { color: #777; }
.chk { width: 18px; height: 14px; }
.fin { flex: 1; height: 69px; margin-left: 4px; border: 1px solid #5c5c5c; border-radius: 4px; background: #292929; display: flex; padding: 4px; }
.fin textarea { flex: 1; resize: none; }
.x-void { flex: 1; }
.x-status { display: flex; align-items: center; height: 25px; border-top: 1px solid #333; background: #141414; padding: 0 20px 0 12px; font-size: 11px; gap: 28px; }
.rd { color: #f0f0f0; margin-right: auto; }
.zm { display: flex; align-items: center; gap: 6px; margin: 0 -12px 0 -7px; }
.zm input { appearance: none; width: 110px; height: 1px; background: #aaa; }
.zm input::-webkit-slider-thumb { appearance: none; width: 2px; height: 10px; background: #bbb; }
```
